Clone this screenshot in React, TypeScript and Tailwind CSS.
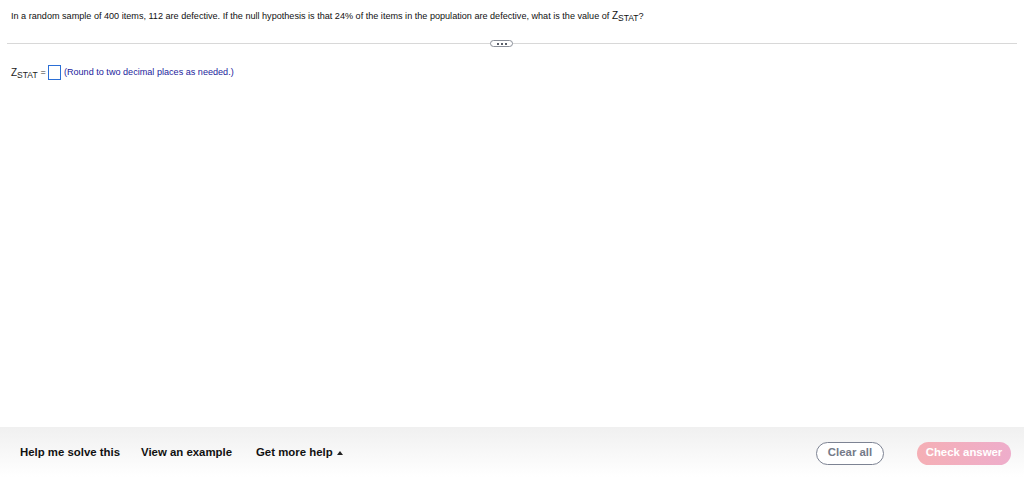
export default function App() {
  return (
    <div className="h-[477px] w-full flex flex-col bg-white font-['Liberation_Sans',Arial,sans-serif] text-black">
      <div className="flex-1 flex flex-col">
        <p className="pl-[11px] pt-[10px] text-[9.1px] leading-[11px] text-[#111]">
          In a random sample of 400 items, 112 are defective. If the null hypothesis is that 24% of the items in the population are defective, what is the value of{" "}
          <span className="text-[10px]">Z</span>
          <sub className="text-[8.5px]">STAT</sub>?
        </p>

        {/* divider with expand pill */}
        <div className="relative mx-[7px] mt-[21px] h-px bg-[#d8d8d8]">
          <div className="absolute left-[483px] top-[-3px] h-[7px] w-[23px] rounded-full border border-[#8a8f99] bg-white flex items-center justify-center gap-[2px]">
            <span className="h-[2px] w-[2px] bg-[#5a5f6a]" />
            <span className="h-[2px] w-[2px] bg-[#5a5f6a]" />
            <span className="h-[2px] w-[2px] bg-[#5a5f6a]" />
          </div>
        </div>

        <div className="flex items-center pl-[11px] mt-[21px] text-[9.1px] leading-[11px]">
          <span className="text-[#222]">
            <span className="text-[10px]">Z</span>
            <sub className="text-[8.5px]">STAT</sub>
          </span>
          <span className="ml-[3px] text-[#333]">=</span>
          <span className="ml-[2px] h-[15px] w-[13px] border border-[#2b6fd6] bg-white" />
          <span className="ml-[3px] text-[#1c1c9c]">(Round to two decimal places as needed.)</span>
        </div>
      </div>

      {/* footer */}
      <div className="h-[50px] flex items-center pt-[2px] bg-gradient-to-b from-[#f0f0f0] to-white">
        <div className="flex items-center pl-[20px] text-[11.4px] font-bold text-[#111]">
          <span>Help me solve this</span>
          <span className="ml-[21px]">View an example</span>
          <span className="ml-[24px] flex items-center gap-[4px]">
            Get more help
            <svg width="6" height="4" viewBox="0 0 6 4">
              <path d="M0 4 L3 0 L6 4 Z" fill="#222" />
            </svg>
          </span>
        </div>
        <div className="ml-auto flex items-center pr-[13px] gap-[33px]">
          <button className="h-[23px] w-[68px] rounded-full border-[1.5px] border-[#7d8393] bg-white text-[11.4px] font-bold text-[#747a88]">
            Clear all
          </button>
          <button className="h-[23px] w-[94px] rounded-full bg-gradient-to-r from-[#f5afb5] to-[#eeadcb] text-[11.4px] font-bold text-white">
            Check answer
          </button>
        </div>
      </div>
    </div>
  );
}
